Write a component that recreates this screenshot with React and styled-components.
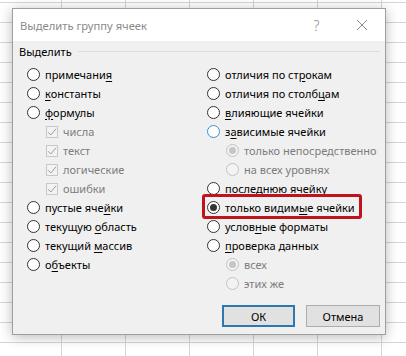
import React from "react"
import styled, { createGlobalStyle } from "styled-components"

const GlobalStyle = createGlobalStyle`
   html, body {
      margin: 0;
      padding: 0;
   }
   body {
      width: 406px;
      height: 356px;
      overflow: hidden;
      background-color: #ffffff;
      background-image:
         linear-gradient(to right, #d6d6d6 1px, transparent 1px),
         linear-gradient(to bottom, #d6d6d6 1px, transparent 1px);
      background-size: 64px 20px;
      background-position: 61px 2px;
      font-family: "Noto Sans", "Open Sans", sans-serif;
   }
`

const leftItems = [
   { label: "примечани&я" },
   { label: "&константы" },
   { label: "&формулы" },
   { label: "числа", check: true },
   { label: "текст", check: true },
   { label: "логические", check: true },
   { label: "ошибки", check: true },
   { label: "пустые яче&йки" },
   { label: "текущую &область" },
   { label: "текущий &массив" },
   { label: "о&бъекты" },
]

const rightItems = [
   { label: "отличия по ст&рокам" },
   { label: "отличия по столб&цам" },
   { label: "&влияющие ячейки" },
   { label: "з&ависимые ячейки", focus: true },
   { label: "только непосредственно", sub: true, checked: true },
   { label: "на всех уровнях", sub: true },
   { label: "после&днюю ячейку" },
   { label: "только видим&ые ячейки", checked: true, mark: true },
   { label: "услов&ные форматы" },
   { label: "&проверка данных" },
   { label: "всех", sub: true, checked: true },
   { label: "этих же", sub: true },
]

// "&" marks the access-key letter
const Label = ({ text }) => {
   const i = text.indexOf("&")
   if (i < 0) return <span>{text}</span>
   return (
      <span>
         {text.slice(0, i)}
         <Key>{text[i + 1]}</Key>
         {text.slice(i + 2)}
      </span>
   )
}

const Item = ({ item }) => {
   const disabled = item.check || item.sub
   return (
      <Row $indent={disabled}>
         {item.mark && <Highlight />}
         {item.check ? (
            <Check>
               <svg width='10' height='10' viewBox='0 0 10 10'>
                  <path d='M1 5.2 L3.8 8 L9 1.8' fill='none' stroke='#9a9a9a' strokeWidth='1' />
               </svg>
            </Check>
         ) : (
            <Radio $disabled={disabled} $focus={item.focus}>
               {item.checked && <Dot $disabled={disabled} />}
            </Radio>
         )}
         <Text $disabled={disabled}>
            <Label text={item.label} />
         </Text>
      </Row>
   )
}

const App = () => {
   return (
      <>
         <GlobalStyle />
         <Dialog>
            <TitleBar>
               <Title>Выделить группу ячеек</Title>
               <Help>?</Help>
               <Close>
                  <svg width='12' height='12' viewBox='0 0 12 12'>
                     <path d='M1 1 L11 11 M11 1 L1 11' stroke='#8a8a8a' strokeWidth='1' />
                  </svg>
               </Close>
            </TitleBar>
            <Body>
               <GroupHead>
                  <span>Выделить</span>
                  <Rule />
               </GroupHead>
               <Columns>
                  <Column>
                     {leftItems.map(el => (
                        <Item key={el.label} item={el} />
                     ))}
                  </Column>
                  <Column>
                     {rightItems.map(el => (
                        <Item key={el.label} item={el} />
                     ))}
                  </Column>
               </Columns>
               <Buttons>
                  <Button $primary>ОК</Button>
                  <Button>Отмена</Button>
               </Buttons>
            </Body>
         </Dialog>
      </>
   )
}

export default App

const Dialog = styled.div`
   margin: 8px 0 0 12px;
   width: 372px;
   height: 325px;
   border: 1px solid #9e9e9e;
   background: #f0f0f0;
   box-shadow: 0 2px 12px rgba(0, 0, 0, 0.28);
   display: flex;
   flex-direction: column;
`
const TitleBar = styled.div`
   height: 32px;
   background: #ffffff;
   display: flex;
   align-items: center;
   padding: 0 0 0 7px;
`
const Title = styled.div`
   flex: 1;
   font-size: 11.2px;
   color: #8a8a8a;
`
const Help = styled.div`
   width: 45px;
   text-align: center;
   font-size: 14px;
   font-weight: 300;
   color: #8a8a8a;
`
const Close = styled.div`
   width: 46px;
   display: flex;
   justify-content: center;
   align-items: center;
`
const Body = styled.div`
   flex: 1;
   display: flex;
   flex-direction: column;
   padding: 1px 5px 7px 6px;
`
const GroupHead = styled.div`
   height: 18px;
   display: flex;
   align-items: center;
   gap: 6px;
   font-size: 11px;
   color: #000;
`
const Rule = styled.div`
   flex: 1;
   height: 1px;
   background: #dcdcdc;
`
const Columns = styled.div`
   display: grid;
   grid-template-columns: 180px 1fr;
   padding: 5px 0 0 8px;
`
const Column = styled.div`
   display: flex;
   flex-direction: column;
`
const Row = styled.div`
   position: relative;
   height: 19px;
   display: flex;
   align-items: center;
   gap: 5px;
   padding-left: ${p => (p.$indent ? "19px" : "0")};
   font-size: 11px;
`
const Radio = styled.span`
   box-sizing: border-box;
   width: 13px;
   height: 13px;
   border-radius: 50%;
   border: 1px solid ${p => (p.$disabled ? "#c2c2c2" : p.$focus ? "#3d8fc9" : "#333")};
   background: ${p => (p.$disabled ? "#f3f3f3" : "#fff")};
   display: flex;
   align-items: center;
   justify-content: center;
   flex-shrink: 0;
`
const Dot = styled.span`
   width: 7px;
   height: 7px;
   border-radius: 50%;
   background: ${p => (p.$disabled ? "#c6c6c6" : "#333")};
`
const Check = styled.span`
   box-sizing: border-box;
   width: 12px;
   height: 12px;
   border: 1px solid #c8c8c8;
   background: #f3f3f3;
   display: flex;
   align-items: center;
   justify-content: center;
   flex-shrink: 0;
`
const Text = styled.span`
   color: ${p => (p.$disabled ? "#7c7c7c" : "#000")};
   white-space: nowrap;
`
const Key = styled.span`
   text-decoration: underline;
   text-underline-offset: 2px;
`
const Highlight = styled.span`
   position: absolute;
   left: -5px;
   top: -4px;
   width: 160px;
   height: 25px;
   box-sizing: border-box;
   border: 3px solid #c0131c;
   border-radius: 3px;
   pointer-events: none;
`
const Buttons = styled.div`
   margin-top: auto;
   display: flex;
   justify-content: flex-end;
   gap: 11px;
`
const Button = styled.button`
   box-sizing: border-box;
   width: ${p => (p.$primary ? "73px" : "74px")};
   height: 22px;
   padding: 0;
   background: #e1e1e1;
   border: ${p => (p.$primary ? "2px solid #2f78ad" : "1px solid #adadad")};
   font-family: "Noto Sans", "Open Sans", sans-serif;
   font-size: 11px;
   color: #000;
`
